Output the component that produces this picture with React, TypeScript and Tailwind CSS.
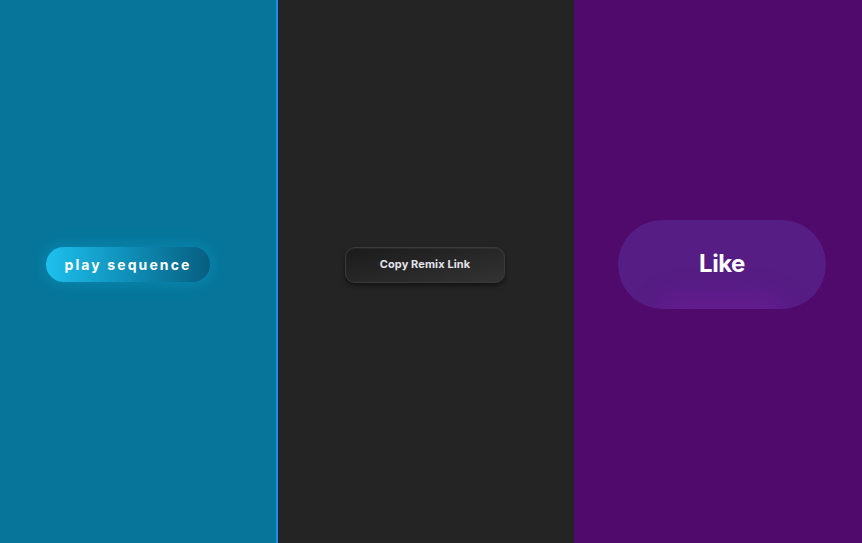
import React from "react";

export default function App() {
  return (
    <div
      className="flex h-[543px] w-[862px] overflow-hidden"
      style={{ fontFamily: "Inter, 'Liberation Sans', sans-serif" }}
    >
      {/* Teal panel */}
      <div className="flex h-full w-[276px] shrink-0 items-center justify-center bg-[#067599]">
        <button className="ml-[-20px] mt-[-14px] flex h-[35px] w-[164px] items-center justify-center rounded-full bg-gradient-to-r from-[#1ec0ee] via-[#0f8fb8] to-[#075e80] text-[14px] font-bold tracking-[0.15em] text-white shadow-[0_0_14px_4px_rgba(20,160,210,0.35)]">
          play sequence
        </button>
      </div>

      {/* Divider */}
      <div className="h-full w-[2px] shrink-0 bg-[#1e8fef]" />

      {/* Dark panel */}
      <div className="flex h-full w-[296px] shrink-0 items-center justify-center bg-[#242424]">
        <button className="ml-[-2px] mt-[-14px] flex h-[36px] w-[160px] items-center justify-center rounded-[10px] border border-[#3a3a3a] bg-gradient-to-br from-[#1b1b1b] to-[#333333] text-[11px] font-bold tracking-[0.01em] text-[#e4e4ec] shadow-[0_3px_4px_rgba(0,0,0,0.45),inset_0_1px_1px_rgba(255,255,255,0.06)]">
          Copy Remix Link
        </button>
      </div>

      {/* Purple panel */}
      <div className="flex h-full flex-1 items-center justify-center bg-[#4f0a6b]">
        <button className="relative ml-[8px] mt-[-15px] flex h-[89px] w-[208px] items-center justify-center overflow-hidden rounded-full bg-[#561d84]">
          <span className="pointer-events-none absolute bottom-[-34px] left-1/2 h-[46px] w-[130px] -translate-x-1/2 rounded-full bg-[#7a1aa0] opacity-45 blur-[14px]" />
          <span className="relative text-[24px] font-bold tracking-[-0.02em] text-white">Like</span>
        </button>
      </div>
    </div>
  );
}
